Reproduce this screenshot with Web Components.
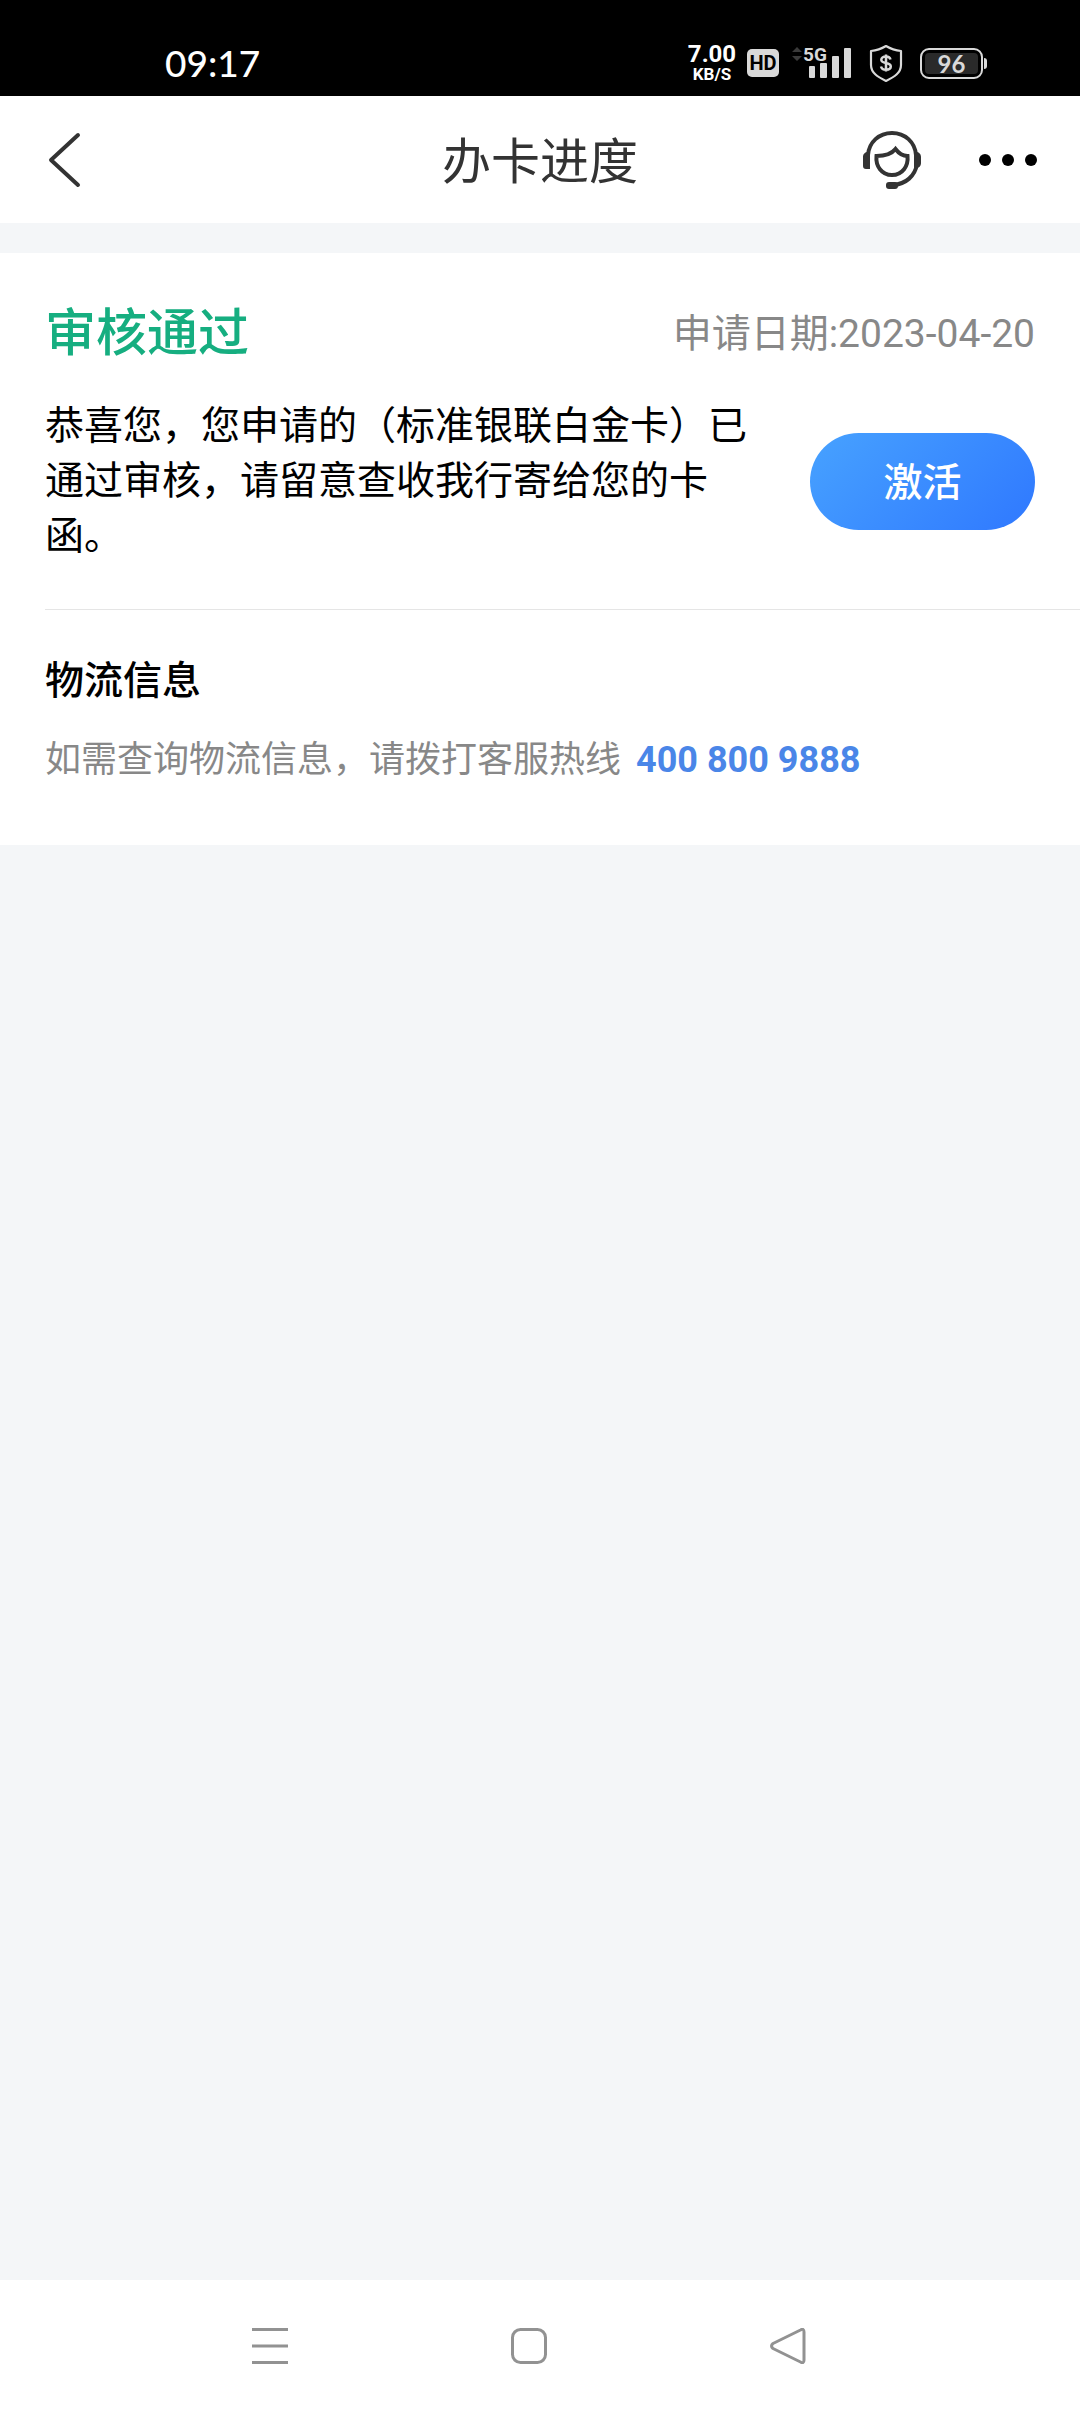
<!DOCTYPE html>
<html lang="zh-CN">
<head>
<meta charset="utf-8">
<meta name="viewport" content="width=device-width, initial-scale=1">
<title>办卡进度</title>
<style>
html, body {
	margin: 0;
	height: 100%;
}

body {
	font-family: Roboto, "Noto Sans CJK SC", sans-serif;
	color: #000;
	background-color: #f4f6f8;
}
</style>
</head>
<body>

<phone-screen>
	<status-bar slot="top" time="09:17" speed="7.00" battery="96"></status-bar>
	<page-header slot="top">办卡进度</page-header>

	<progress-card>
		<span slot="status">审核通过</span>
		<span slot="date">申请日期:2023-04-20</span>
		恭喜您，您申请的（标准银联白金卡）已通过审核，请留意查收我行寄给您的卡函。
		<action-button slot="action">激活</action-button>
		<logistics-info slot="extra" phone="400 800 9888">
			<span slot="title">物流信息</span>
			如需查询物流信息，请拨打客服热线
		</logistics-info>
	</progress-card>

	<nav-bar slot="bottom"></nav-bar>
</phone-screen>

<script>
function makeTemplate(html) {
	const template = document.createElement("template");
	template.innerHTML = html;
	return template;
}

/* screen */
const screenTemplate = makeTemplate(`
<style>
:host {
	display: flex;
	flex-direction: column;
	min-height: 100vh;
}

main {
	flex: 1;
	padding-top: 30px;
}
</style>

<slot name="top"></slot>
<main><slot></slot></main>
<slot name="bottom"></slot>
`);

class PhoneScreen extends HTMLElement {
	connectedCallback() {
		this.attachShadow({ mode: "open" }).appendChild(screenTemplate.content.cloneNode(true));
	}
}

/* status bar */
const statusTemplate = makeTemplate(`
<style>
:host {
	display: flex;
	align-items: flex-end;
	justify-content: space-between;
	height: 96px;
	padding: 0 93px 14px 165px;
	box-sizing: border-box;
	background-color: #000;
	color: #fff;
}

.time {
	font: 500 37px/38px Lato, sans-serif;
}

.icons {
	display: flex;
	align-items: center;
	height: 38px;
}

.speed {
	width: 50px;
	margin-right: 10px;
	font-weight: 700;
	text-align: center;
}

.speed span {
	display: block;
	font-size: 24px;
	line-height: 22px;
}

.speed small {
	display: block;
	font-size: 17px;
	line-height: 18px;
}

.hd {
	width: 32px;
	height: 28px;
	margin-right: 12px;
	border-radius: 5px;
	background-color: #d9d9d9;
	color: #000;
	font: 700 20px/28px Roboto, sans-serif;
	text-align: center;
}

.signal {
	position: relative;
	width: 61px;
	height: 38px;
	margin-right: 17px;
}

.signal span {
	position: absolute;
	left: 12px;
	top: 1px;
	font: 700 19px/20px Roboto, sans-serif;
	color: #d9d9d9;
}

.shield {
	margin-right: 17px;
}

.battery {
	display: flex;
	align-items: center;
}

.cell {
	width: 63px;
	height: 31px;
	padding: 3px;
	box-sizing: border-box;
	border: 2px solid #d9d9d9;
	border-radius: 9px;
}

.cell span {
	display: block;
	height: 21px;
	border-radius: 4px;
	background-color: #2a2a2a;
	color: #d9d9d9;
	font: 700 24px/21px Lato, sans-serif;
	text-align: center;
}

.cap {
	width: 3px;
	height: 11px;
	margin-left: 1px;
	border-radius: 0 3px 3px 0;
	background-color: #d9d9d9;
}

svg {
	display: block;
}
</style>

<div class="time"></div>
<div class="icons">
	<div class="speed"><span></span><small>KB/S</small></div>
	<div class="hd">HD</div>
	<div class="signal">
		<svg width="61" height="38" viewBox="0 0 61 38">
			<path d="M1 8l5-5 5 5zM1 12l5 5 5-5z" fill="#3a3a3a"/>
			<g fill="#d9d9d9">
				<rect x="18" y="22" width="6" height="12" rx="1"/>
				<rect x="29" y="19" width="7" height="15" rx="1"/>
				<rect x="41" y="12" width="7" height="22" rx="1"/>
				<rect x="53" y="4" width="7" height="30" rx="1"/>
			</g>
		</svg>
		<span>5G</span>
	</div>
	<svg class="shield" width="34" height="38" viewBox="0 0 34 38" fill="none" stroke="#d9d9d9">
		<path d="M17 2C12 5 7 6.500 2 7v14c0 8 7 12 15 16 8-4 15-8 15-16V7C27 6.500 22 5 17 2z" stroke-width="2.200" stroke-linejoin="round"/>
		<path d="M17 10.500v17M21.500 15.500c-.5-2-2-3-4.500-3-3 0-4.700 1.300-4.700 3.300 0 2.200 2 2.800 4.700 3.300 3 .6 4.800 1.300 4.800 3.500 0 2-2 3.200-4.800 3.200-2.700 0-4.500-1.200-5-3.300" stroke-width="2.500"/>
	</svg>
	<div class="battery">
		<div class="cell"><span></span></div>
		<div class="cap"></div>
	</div>
</div>
`);

class StatusBar extends HTMLElement {
	connectedCallback() {
		const root = this.attachShadow({ mode: "open" });
		root.appendChild(statusTemplate.content.cloneNode(true));
		root.querySelector(".time").textContent = this.getAttribute("time");
		root.querySelector(".speed span").textContent = this.getAttribute("speed");
		root.querySelector(".cell span").textContent = this.getAttribute("battery");
	}
}

/* header */
const headerTemplate = makeTemplate(`
<style>
:host {
	display: grid;
	grid-template-columns: 1fr auto 1fr;
	align-items: center;
	height: 127px;
	padding: 0 40px;
	background-color: #fff;
	color: #333;
}

h1 {
	margin: 0;
	padding-top: 6px;
	font-size: 49px;
	font-weight: 400;
	line-height: 64px;
}

button {
	display: block;
	padding: 0;
	border: 0;
	background: none;
}

svg {
	display: block;
}

.tools {
	display: flex;
	align-items: center;
	justify-content: flex-end;
	gap: 55px;
}
</style>

<button type="button" aria-label="返回">
	<svg width="44" height="58" viewBox="0 0 44 58" fill="none" stroke="#333" stroke-width="4" stroke-linecap="round" stroke-linejoin="round">
		<path d="M38 4L11 29l27 25"/>
	</svg>
</button>
<h1><slot></slot></h1>
<div class="tools">
	<button type="button" aria-label="客服">
		<svg width="58" height="58" viewBox="0 0 58 58" fill="none" stroke="#333" stroke-width="4">
			<path d="M5 24C6 11 16 2 29 2s23 9 24 22"/>
			<path d="M54 33c-2 12-11 20-24 21"/>
			<path d="M13.500 25c8 0 15-2 19-7 3 4 7 7 12 7 1 10-5 19-15.500 19S12.500 35 13.500 25z"/>
			<path d="M5 21h2v17H3c-2 0-3-1-3-3V26c0-3 2-5 5-5zM51 21h2c3 0 5 2 5 5v6c0 3-2 5-5 5h-2z" fill="#333" stroke="none"/>
			<rect x="23" y="51" width="12" height="7" rx="3" fill="#333" stroke="none"/>
		</svg>
	</button>
	<button type="button" aria-label="更多">
		<svg width="64" height="12" viewBox="0 0 64 12">
			<circle cx="9" cy="6" r="6"/>
			<circle cx="32" cy="6" r="6"/>
			<circle cx="55" cy="6" r="6"/>
		</svg>
	</button>
</div>
`);

class PageHeader extends HTMLElement {
	connectedCallback() {
		this.attachShadow({ mode: "open" }).appendChild(headerTemplate.content.cloneNode(true));
	}
}

/* card */
const cardTemplate = makeTemplate(`
<style>
:host {
	display: block;
	padding: 49px 0 57px 45px;
	background-color: #fff;
	font-size: 39px;
	line-height: 55px;
}

.head, .body {
	display: flex;
	align-items: center;
	justify-content: space-between;
	padding-right: 45px;
}

h2 {
	margin: 0;
	color: #16ae80;
	font-size: 51px;
	font-weight: 500;
	line-height: 64px;
}

.date {
	color: #888;
}

.body {
	gap: 48px;
	padding-top: 33px;
	padding-bottom: 45px;
	border-bottom: 1px solid #e5e5e5;
}

p {
	flex: 1;
	margin: 0;
}
</style>

<div class="head">
	<h2><slot name="status"></slot></h2>
	<div class="date"><slot name="date"></slot></div>
</div>
<div class="body">
	<p><slot></slot></p>
	<slot name="action"></slot>
</div>
<slot name="extra"></slot>
`);

class ProgressCard extends HTMLElement {
	connectedCallback() {
		this.attachShadow({ mode: "open" }).appendChild(cardTemplate.content.cloneNode(true));
	}
}

const buttonTemplate = makeTemplate(`
<style>
:host {
	display: block;
	flex: none;
}

button {
	display: block;
	width: 225px;
	height: 97px;
	padding: 0 0 6px;
	border: 0;
	border-radius: 49px;
	background: linear-gradient(135deg, #47a2ff, #2f78ff);
	color: #fff;
	font-family: inherit;
	font-size: 39px;
	font-weight: 500;
}
</style>

<button type="button"><slot></slot></button>
`);

class ActionButton extends HTMLElement {
	connectedCallback() {
		this.attachShadow({ mode: "open" }).appendChild(buttonTemplate.content.cloneNode(true));
	}
}

/* logistics */
const logisticsTemplate = makeTemplate(`
<style>
:host {
	display: block;
	padding-top: 44px;
	padding-right: 45px;
}

h3 {
	margin: 0;
	font-size: 39px;
	font-weight: 500;
	line-height: 55px;
}

.line {
	display: flex;
	gap: 15px;
	padding-top: 24px;
	color: #888;
	font-size: 36px;
}

a {
	color: #4a86e8;
	font-weight: 700;
	text-decoration: none;
}
</style>

<h3><slot name="title"></slot></h3>
<div class="line">
	<span><slot></slot></span>
	<a></a>
</div>
`);

class LogisticsInfo extends HTMLElement {
	connectedCallback() {
		const root = this.attachShadow({ mode: "open" });
		root.appendChild(logisticsTemplate.content.cloneNode(true));
		const phone = this.getAttribute("phone");
		const link = root.querySelector("a");
		link.textContent = phone;
		link.href = "tel:" + phone.replace(/ /g, "");
	}
}

/* bottom navigation */
const navTemplate = makeTemplate(`
<style>
:host {
	display: block;
	background-color: #fff;
}

nav {
	display: grid;
	grid-template-columns: repeat(3, 1fr);
	align-items: center;
	height: 132px;
	padding: 0 15% 0 13%;
}

button {
	display: block;
	margin: 0 auto;
	padding: 0;
	border: 0;
	background: none;
}

svg {
	display: block;
	fill: none;
	stroke: #929292;
	stroke-width: 3;
}
</style>

<nav>
	<button type="button" aria-label="最近任务">
		<svg width="36" height="36" viewBox="0 0 36 36"><path d="M0 1.500h36M0 18h36M0 34.500h36"/></svg>
	</button>
	<button type="button" aria-label="主屏幕">
		<svg width="36" height="36" viewBox="0 0 36 36"><rect x="1.500" y="1.500" width="33" height="33" rx="8"/></svg>
	</button>
	<button type="button" aria-label="返回">
		<svg width="36" height="36" viewBox="0 0 36 36"><path d="M30.500 2Q34 0 34 4v28q0 4-3.500 2L3 20.500Q0 18 3 15.500z" stroke-linejoin="round"/></svg>
	</button>
</nav>
`);

class NavBar extends HTMLElement {
	connectedCallback() {
		this.attachShadow({ mode: "open" }).appendChild(navTemplate.content.cloneNode(true));
	}
}

customElements.define("phone-screen", PhoneScreen);
customElements.define("status-bar", StatusBar);
customElements.define("page-header", PageHeader);
customElements.define("progress-card", ProgressCard);
customElements.define("action-button", ActionButton);
customElements.define("logistics-info", LogisticsInfo);
customElements.define("nav-bar", NavBar);
</script>
</body>
</html>
